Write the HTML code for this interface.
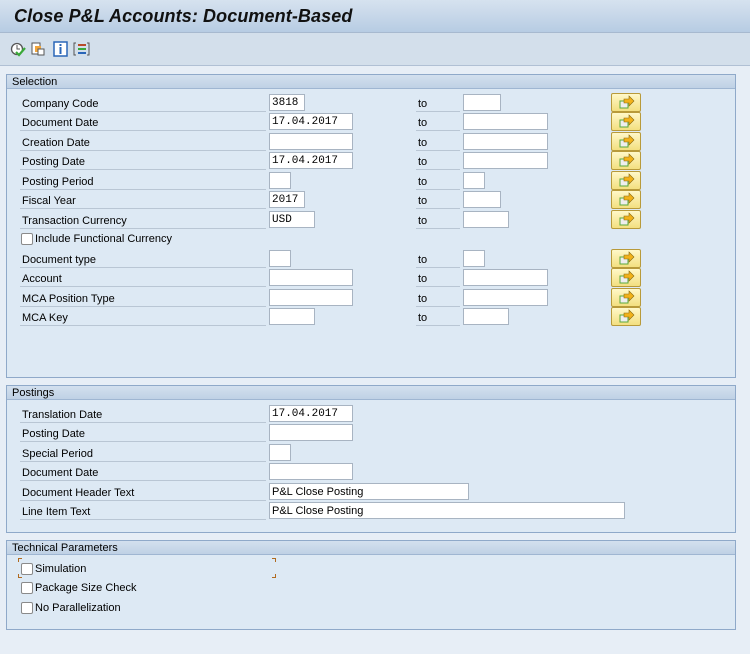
<!DOCTYPE html><html><head><style>
*{margin:0;padding:0;box-sizing:border-box}
body{width:750px;height:654px;background:#e7eef6;font-family:"Liberation Sans",sans-serif;font-size:11px;color:#000;position:relative;overflow:hidden}
.a{position:absolute}
.title{left:0;top:0;width:750px;height:33px;background:linear-gradient(#d6e2ef,#b7cce3);border-bottom:1px solid #a7b9cf}
.title span{position:absolute;left:14px;top:6px;font-size:18px;font-weight:bold;font-style:italic;color:#111;letter-spacing:0.1px}
.tb{left:0;top:33px;width:750px;height:33px;background:#d3dfeb;border-bottom:1px solid #b0c0d4}
.panel{left:6px;width:730px;background:#dde9f4;border:1px solid #8fa9c9}
.ph{left:0;top:0;width:100%;height:14px;background:linear-gradient(#d3e0ee,#bfd1e5);border-bottom:1px solid #9fb6d2;padding-left:5px;line-height:15px}
.lb{height:19px;line-height:16px;padding-top:3px;border-bottom:1px solid #b9c6d4;padding-left:2px}
.in{height:17px;background:#fff;border:1px solid #a8b4c2;font-family:"Liberation Mono",monospace;font-size:11px;line-height:16px;padding-left:2px}
.bt{width:30px;height:19px;background:linear-gradient(#fff8c8,#f3df80);border:1px solid #b89a3a;border-radius:2px}
.cb{width:12px;height:12px;border:1px solid #8a8a8a;background:#fff;border-radius:2px}
</style></head><body>
<div class="a title"><span>Close P&amp;L Accounts: Document-Based</span></div>
<div class="a tb">
<svg class="a" style="left:10px;top:7px" width="90" height="18" viewBox="0 0 90 18">
<circle cx="7" cy="9" r="5.5" fill="#fff" stroke="#555" stroke-width="1.3"/><path d="M7 5v4h3" stroke="#555" fill="none"/><path d="M6 12l3 3 6-7" stroke="#3aa93a" stroke-width="2.2" fill="none"/>
<rect x="22" y="3" width="8" height="11" fill="#fff" stroke="#555"/><rect x="25" y="6" width="6" height="6" fill="#f2a53a"/><rect x="28" y="9" width="6" height="6" fill="#fff" stroke="#555"/>
<rect x="44" y="2" width="13" height="14" fill="#fff" stroke="#2a66b8" stroke-width="1.5"/><rect x="49.5" y="4" width="2" height="2" fill="#2a66b8"/><rect x="49.5" y="7" width="2" height="7" fill="#2a66b8"/>
<path d="M66 3h-2v12h2M77 3h2v12h-2" stroke="#555" fill="none"/><rect x="68" y="4" width="8" height="2" fill="#b84b2a"/><rect x="68" y="8" width="8" height="2" fill="#3aa93a"/><rect x="68" y="12" width="8" height="2" fill="#2a66b8"/>
</svg></div>

<div class="a panel" style="top:74px;height:304px"><div class="a ph">Selection</div></div>
<div class="a panel" style="top:385px;height:148px"><div class="a ph">Postings</div></div>
<div class="a panel" style="top:540px;height:90px"><div class="a ph">Technical Parameters</div></div>

<div id="rows"></div>
<script>
var h='';
function lb(x,y,w,t){h+='<div class="a lb" style="left:'+x+'px;top:'+y+'px;width:'+w+'px">'+t+'</div>'}
function inp(x,y,w,t){h+='<div class="a in" style="left:'+x+'px;top:'+(y+1)+'px;width:'+w+'px">'+(t||'')+'</div>'}
function bt(y){h+='<div class="a bt" style="left:611px;top:'+y+'px"><svg width="28" height="17" viewBox="0 0 28 17"><rect x="8" y="7" width="8" height="7" fill="#eee" stroke="#5aa83a"/><path d="M12 5h5v-3l5 5-5 5v-3h-5z" fill="#f2b21a" stroke="#8a6a10" stroke-width=".6"/></svg></div>'}
var sel=[["Company Code",36,"3818",38],["Document Date",84,"17.04.2017",85],["Creation Date",84,"",85],["Posting Date",84,"17.04.2017",85],["Posting Period",22,"",22],["Fiscal Year",36,"2017",38],["Transaction Currency",46,"USD",46],null,["Document type",22,"",22],["Account",84,"",85],["MCA Position Type",84,"",85],["MCA Key",46,"",46]];
for(var i=0;i<12;i++){var y=93+i*19.5|0;var r=sel[i];
 if(!r){h+='<div class="a cb" style="left:21px;top:'+(y+4)+'px"></div><div class="a" style="left:35px;top:'+(y+2)+'px;line-height:17px">Include Functional Currency</div>';continue}
 lb(20,y,246,r[0]);inp(269,y,r[1],r[2]);lb(416,y,44,'to');inp(463,y,r[3]);bt(y);}
var po=[["Translation Date",84,"17.04.2017"],["Posting Date",84,""],["Special Period",22,""],["Document Date",84,""],["Document Header Text",200,"<span style='font-family:Liberation Sans'>P&amp;L Close Posting</span>"],["Line Item Text",356,"<span style='font-family:Liberation Sans'>P&amp;L Close Posting</span>"]];
for(var i=0;i<6;i++){var y=404+i*19.5|0;lb(20,y,246,po[i][0]);inp(269,y,po[i][1],po[i][2]);}
var tp=["Simulation","Package Size Check","No Parallelization"];
for(var i=0;i<3;i++){var y=560+i*19.5|0;h+='<div class="a cb" style="left:21px;top:'+(y+3)+'px"></div><div class="a" style="left:35px;top:'+(y+1)+'px;line-height:17px">'+tp[i]+'</div>';}
h+='<div class="a" style="left:18px;top:558px;width:4px;height:4px;border-left:1.5px solid #b06a20;border-top:1.5px solid #b06a20"></div><div class="a" style="left:18px;top:574px;width:4px;height:4px;border-left:1.5px solid #b06a20;border-bottom:1.5px solid #b06a20"></div><div class="a" style="left:272px;top:558px;width:4px;height:4px;border-right:1.5px solid #b06a20;border-top:1.5px solid #b06a20"></div><div class="a" style="left:272px;top:574px;width:4px;height:4px;border-right:1.5px solid #b06a20;border-bottom:1.5px solid #b06a20"></div>';
document.getElementById('rows').innerHTML=h;
</script>
</body></html>
